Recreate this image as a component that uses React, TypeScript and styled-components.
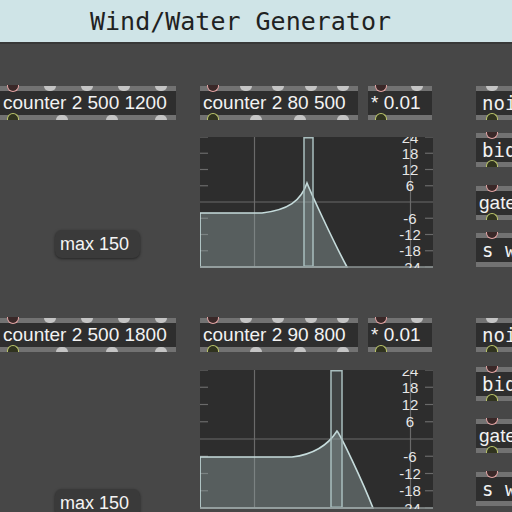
import React, { FC } from 'react';
import styled, { createGlobalStyle } from 'styled-components';

const GlobalStyle = createGlobalStyle`
  html, body {
    margin: 0;
    padding: 0;
    background: #474747;
    overflow: hidden;
  }
`;

const Frame = styled.div`
  width: 512px;
  height: 512px;
  display: flex;
  flex-direction: column;
  overflow: hidden;
`;

const TitleBar = styled.div`
  height: 42px;
  flex: none;
  display: flex;
  align-items: center;
  padding-left: 90px;
  background: #cfe4e7;
  border-bottom: 2px solid #383838;
  color: #1f2222;
  font-family: "DejaVu Sans Mono", monospace;
  font-size: 25px;
`;

// the patcher is a free canvas: each object's place on it is part of the patch
const Canvas = styled.div`
  position: relative;
  flex: 1;
  background: #474747;
`;

const PatchObject = styled.div<{ $x: number; $y: number; $w: number }>`
  position: absolute;
  left: ${p => p.$x}px;
  top: ${p => p.$y}px;
  width: ${p => p.$w}px;
  display: flex;
  flex-direction: column;
`;

const Strip = styled.div`
  position: relative;
  height: 5px;
  background: #727272;
`;

const Body = styled.div<{ $mono?: boolean }>`
  height: 24px;
  line-height: 24px;
  padding-left: ${p => (p.$mono ? 6 : 3)}px;
  background: #2e2e2e;
  color: #f2f2f2;
  font-family: ${p => (p.$mono ? '"DejaVu Sans Mono", monospace' : '"Liberation Sans", Arial, sans-serif')};
  font-size: 19px;
  white-space: nowrap;
  overflow: hidden;
`;

const Inlet = styled.span<{ $left: number; $hot?: boolean }>`
  position: absolute;
  top: ${p => (p.$hot ? -1 : 0)}px;
  left: ${p => p.$left - 6}px;
  width: 12px;
  height: ${p => (p.$hot ? 7 : 5)}px;
  box-sizing: border-box;
  border-radius: 0 0 6px 6px;
  background: ${p => (p.$hot ? '#3a2828' : '#c4c4c4')};
  border: ${p => (p.$hot ? '1.5px solid #e2a4a4' : 'none')};
  border-top: none;
`;

const Outlet = styled.span<{ $left: number; $hot?: boolean }>`
  position: absolute;
  bottom: 0;
  left: ${p => p.$left - 6}px;
  width: 12px;
  height: ${p => (p.$hot ? 7 : 5)}px;
  box-sizing: border-box;
  border-radius: 6px 6px 0 0;
  background: ${p => (p.$hot ? '#30331f' : '#c4c4c4')};
  border: ${p => (p.$hot ? '1.5px solid #bcc66a' : 'none')};
  border-bottom: none;
`;

const Message = styled.div<{ $x: number; $y: number }>`
  position: absolute;
  left: ${p => p.$x}px;
  top: ${p => p.$y}px;
  width: 85px;
  height: 28px;
  box-sizing: border-box;
  padding-left: 5px;
  line-height: 28px;
  border-radius: 7px;
  background: #3a3a3a;
  box-shadow: 0 1px 3px rgba(0, 0, 0, 0.5);
  color: #f4f4f4;
  font-family: "Liberation Sans", Arial, sans-serif;
  font-size: 18px;
`;

const GraphBox = styled.div<{ $x: number; $y: number }>`
  position: absolute;
  left: ${p => p.$x}px;
  top: ${p => p.$y}px;
  line-height: 0;
`;

// spread n ports from 13px to w-15px
const portPositions = (n: number, w: number) => {
  if (n === 1) return [13];
  const step = (w - 28) / (n - 1);
  return Array.from({ length: n }, (_, i) => Math.round(13 + i * step));
};

interface BoxProps {
  x: number,
  y: number,
  w: number,
  text: string,
  inlets: number,
  outlets: number,
  mono?: boolean,
  coldFirst?: boolean,
  portAt?: number,
}

const Box: FC<BoxProps> = ({ x, y, w, text, inlets, outlets, mono, coldFirst, portAt }) => {
  const ins = portAt ? [portAt] : portPositions(inlets, w);
  const outs = portAt ? [portAt] : portPositions(outlets, w);
  return (
    <PatchObject $x={x} $y={y} $w={w}>
      <Strip>
        {inlets > 0 && ins.map((l, i) => <Inlet key={i} $left={l} $hot={i === 0 && !coldFirst} />)}
      </Strip>
      <Body $mono={mono}>{text}</Body>
      <Strip>
        {outlets > 0 && outs.map((l, i) => <Outlet key={i} $left={l} $hot={i === 0} />)}
      </Strip>
    </PatchObject>
  );
};

interface GraphProps {
  x: number,
  y: number,
  h: number,
  curve: string,
  band: [number, number],
}

const W = 233;
const LABELS = [4, 3, 2, 1, -1, -2, -3, -4];

const FilterGraph: FC<GraphProps> = ({ x, y, h, curve, band }) => {
  const step = h / 8;
  const mid = h / 2;
  return (
    <GraphBox $x={x} $y={y}>
      <svg width={W} height={h + 1} viewBox={`0 0 ${W} ${h + 1}`}>
        <rect x={0} y={0} width={W} height={h} fill="#2d2d2d" />
        <line x1={54.5} y1={0} x2={54.5} y2={h} stroke="#6a6a6a" strokeWidth={1.2} />
        <line x1={210.5} y1={0} x2={210.5} y2={h} stroke="#6a6a6a" strokeWidth={1.2} />
        <line x1={0} y1={mid} x2={W} y2={mid} stroke="#6a6a6a" strokeWidth={1.2} />
        {LABELS.map(k => (
          <g key={k}>
            <line x1={0} y1={mid - k * step} x2={8} y2={mid - k * step} stroke="#6a6a6a" strokeWidth={1.2} />
            <line x1={225} y1={mid - k * step} x2={W} y2={mid - k * step} stroke="#6a6a6a" strokeWidth={1.2} />
          </g>
        ))}
        <path d={curve} fill="rgba(150,168,168,0.4)" stroke="#c6dcdc" strokeWidth={1.6} />
        <rect
          x={band[0]}
          y={0.75}
          width={band[1] - band[0]}
          height={h - 1.5}
          fill="rgba(170,190,190,0.15)"
          stroke="#a9bebe"
          strokeWidth={1.5}
        />
        <line x1={0} y1={h} x2={W} y2={h} stroke="#8c9494" strokeWidth={1.5} />
        {LABELS.map(k => (
          <text
            key={k}
            x={210}
            y={mid - k * step}
            textAnchor="middle"
            dominantBaseline="central"
            fill="#e6e6e6"
            fontSize={15}
            fontFamily='"Liberation Sans", Arial, sans-serif'
          >
            {k * 6}
          </text>
        ))}
      </svg>
    </GraphBox>
  );
};

interface RowProps {
  top: number,
  max: string,
  mid: string,
  right: number[],
  graphTop: number,
  graphH: number,
  curve: string,
  band: [number, number],
  msgTop: number,
}

const PatchRow: FC<RowProps> = ({ top, max, mid, right, graphTop, graphH, curve, band, msgTop }) => (
  <>
    <Box x={0} y={top} w={176} text={`counter 2 500 ${max}`} inlets={5} outlets={4} />
    <Box x={200} y={top} w={158} text={mid} inlets={5} outlets={4} />
    <Box x={368} y={top} w={64} text="* 0.01" inlets={2} outlets={1} />
    <Box x={476} y={right[0]} w={90} text="noise~" inlets={1} outlets={1} mono coldFirst portAt={16} />
    <Box x={476} y={right[1]} w={90} text="biquad~" inlets={1} outlets={1} mono portAt={16} />
    <Box x={476} y={right[2]} w={90} text="gate~ 2" inlets={1} outlets={1} portAt={16} />
    <Box x={476} y={right[3]} w={90} text="s wind" inlets={1} outlets={0} mono portAt={16} />
    <FilterGraph x={200} y={graphTop} h={graphH} curve={curve} band={band} />
    <Message $x={55} $y={msgTop}>max 150</Message>
  </>
);

const App: FC = () => (
  <Frame>
    <GlobalStyle />
    <TitleBar>Wind/Water Generator</TitleBar>
    <Canvas>
      <PatchRow
        top={42}
        max="1200"
        mid="counter 2 80 500"
        right={[42, 89, 142, 189]}
        graphTop={93}
        graphH={130}
        curve="M0,76 L62,76 C88,73 101,64 107,46 C111,56 133,104 147,130 L0,130 Z"
        band={[104, 113]}
        msgTop={186}
      />
      <PatchRow
        top={274}
        max="1800"
        mid="counter 2 90 800"
        right={[274, 323, 375, 428]}
        graphTop={326}
        graphH={138}
        curve="M0,87 L92,87 C118,84 130,72 137,61 C141,66 162,110 173,138 L0,138 Z"
        band={[131, 142]}
        msgTop={445}
      />
    </Canvas>
  </Frame>
);

export default App;
